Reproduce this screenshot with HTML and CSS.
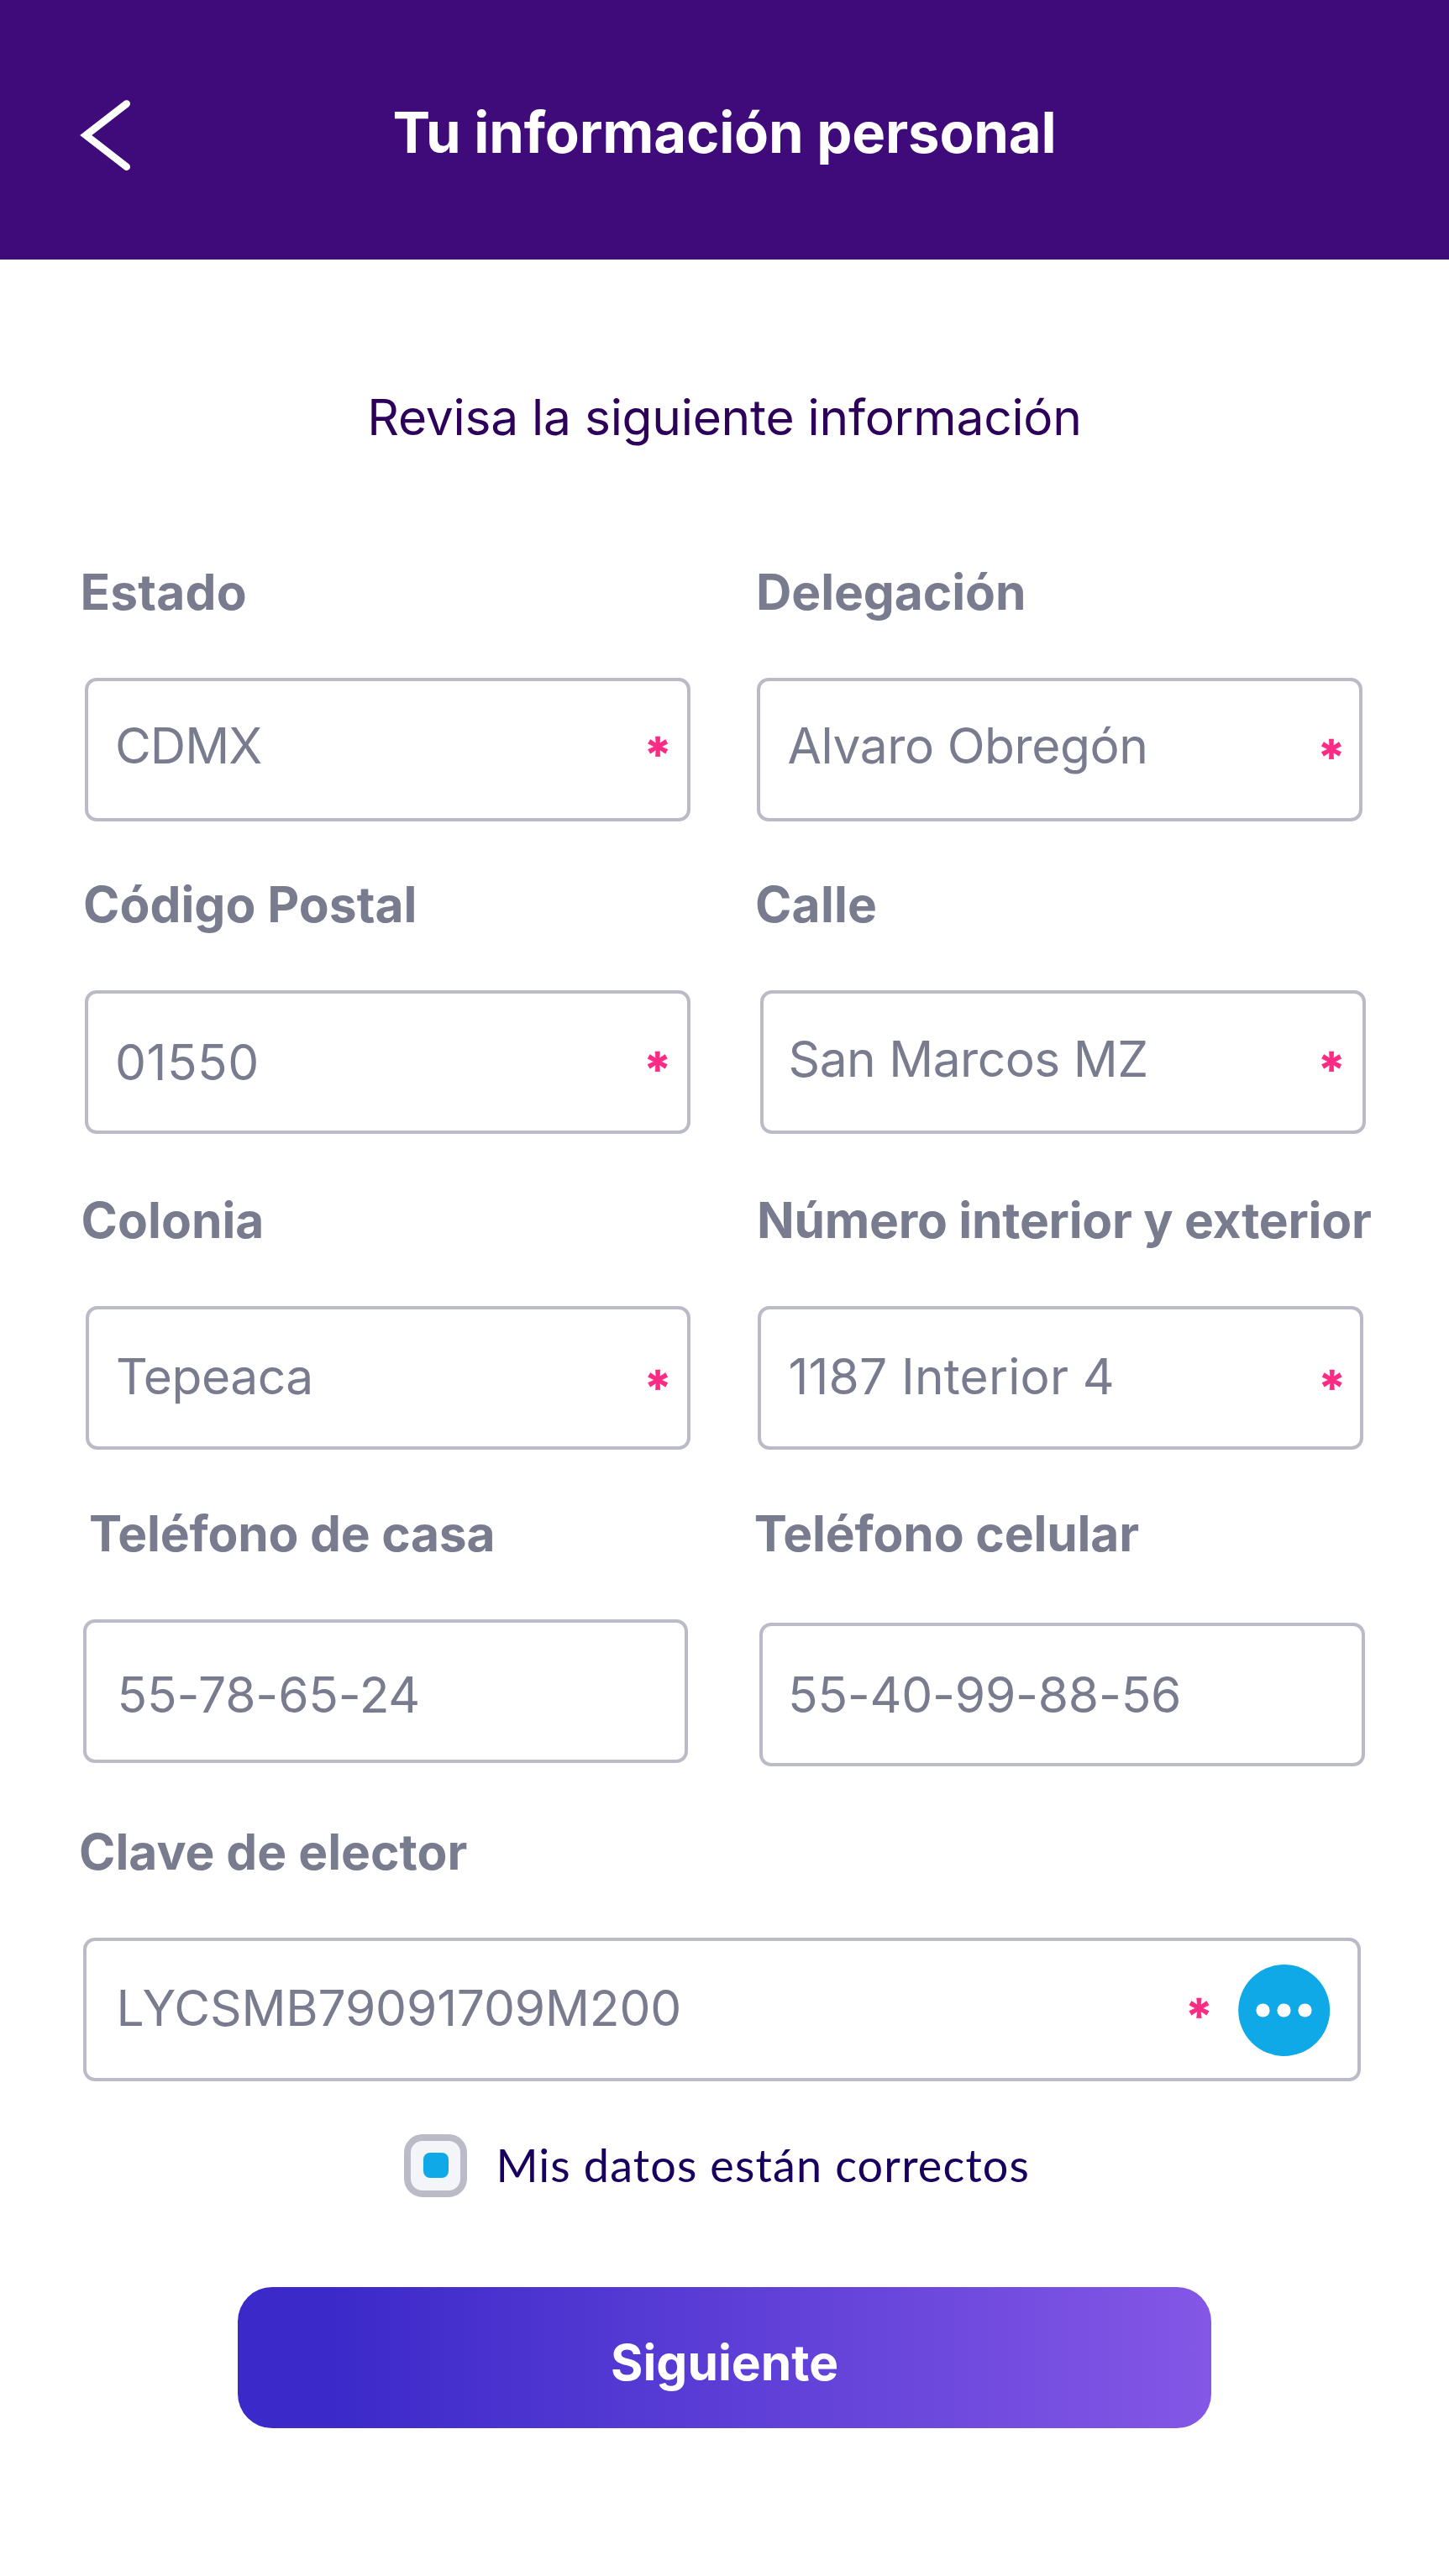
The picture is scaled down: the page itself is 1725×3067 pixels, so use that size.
FILE: index.html
```html
<!DOCTYPE html>
<html lang="es">
<head>
<meta charset="utf-8">
<title>Tu información personal</title>
<link rel="stylesheet" href="styles.css">
</head>
<body>
<header class="topbar">
  <a class="back" href="#" aria-label="Atrás">
    <svg width="64" height="88" viewBox="0 0 64 88" fill="none" stroke="#fff" stroke-width="8.6" stroke-linecap="round"><path d="M56.7 6.5 8.2 44 56.7 81.7"/></svg>
  </a>
  <h1 class="title">Tu información personal</h1>
</header>
<main>
  <p class="intro">Revisa la siguiente información</p>
  <form class="form">
    <div class="field estado">
      <span class="label">Estado</span>
      <div class="box"><span class="value">CDMX</span><span class="required">*</span></div>
    </div>
    <div class="field delegacion">
      <span class="label">Delegación</span>
      <div class="box"><span class="value">Alvaro Obregón</span><span class="required">*</span></div>
    </div>
    <div class="field postal">
      <span class="label">Código Postal</span>
      <div class="box"><span class="value">01550</span><span class="required">*</span></div>
    </div>
    <div class="field calle">
      <span class="label">Calle</span>
      <div class="box"><span class="value">San Marcos MZ</span><span class="required">*</span></div>
    </div>
    <div class="field colonia">
      <span class="label">Colonia</span>
      <div class="box"><span class="value">Tepeaca</span><span class="required">*</span></div>
    </div>
    <div class="field numero">
      <span class="label">Número interior y exterior</span>
      <div class="box"><span class="value">1187 Interior 4</span><span class="required">*</span></div>
    </div>
    <div class="field casa">
      <span class="label">Teléfono de casa</span>
      <div class="box"><span class="value">55-78-65-24</span></div>
    </div>
    <div class="field celular">
      <span class="label">Teléfono celular</span>
      <div class="box"><span class="value">55-40-99-88-56</span></div>
    </div>
    <div class="field clave">
      <span class="label">Clave de elector</span>
      <div class="box">
        <span class="value">LYCSMB79091709M200</span><span class="required">*</span>
        <svg class="more" width="110" height="110" viewBox="0 0 110 110"><circle cx="54.7" cy="54.5" r="54.5" fill="#0fa9e8"/><g fill="#fff"><circle cx="29.5" cy="54.5" r="8.1"/><circle cx="54.5" cy="54.5" r="8.1"/><circle cx="79.5" cy="54.5" r="8.1"/></g></svg>
      </div>
    </div>
  </form>
  <label class="confirm"><span class="check"><span class="mark"></span></span><span class="confirm-text">Mis datos están correctos</span></label>
  <button class="next" type="button">Siguiente</button>
</main>
</body>
</html>
```
FILE: styles.css
```css
* { box-sizing: border-box; }

body {
  margin: 0;
  width: 1725px;
  height: 3067px;
  background: #fff;
  font-family: Inter, "Liberation Sans", sans-serif;
  overflow: hidden;
}

.topbar {
  display: grid;
  grid-template-columns: 160px 1fr 160px;
  align-items: start;
  height: 309.4px;
  padding-top: 117px;
  background: #3f0a79;
}

.back { display: block; padding-left: 94px; height: 88px; }
.back svg { display: block; }

.title {
  margin: 0;
  font-size: 67px;
  line-height: 82px;
  font-weight: 700;
  letter-spacing: -0.19px;
  text-align: center;
  color: #fff;
}

.intro {
  margin: 151.6px 0 0;
  font-size: 58.7px;
  line-height: 72px;
  letter-spacing: -0.27px;
  text-align: center;
  color: #2d0059;
}

.form {
  display: grid;
  grid-template-columns: 803px 740px;
  grid-template-rows: 372px 376px 373px 379px 310px;
  padding-left: 94px;
  margin-top: 136px;
}

.field { --gap: 66px; --label-x: 0px; --box-x: 0px; --box-w: 721px; --label-ls: 0px; }

.label {
  display: block;
  margin: 0 0 var(--gap) var(--label-x);
  font-size: 58.7px;
  line-height: 72px;
  font-weight: 700;
  letter-spacing: var(--label-ls);
  white-space: nowrap;
  color: #797b8f;
}

.box {
  display: flex;
  align-items: flex-start;
  width: var(--box-w);
  height: 171.5px;
  margin-left: var(--box-x);
  padding: 0 var(--pad-r, 19px) 0 var(--pad-l);
  border: 4px solid #bbbbc7;
  border-radius: 14px;
}

.value {
  margin-top: var(--value-y);
  font-size: 58.7px;
  line-height: 72px;
  letter-spacing: var(--value-ls);
  white-space: nowrap;
  color: #797b8f;
}

.required {
  width: 32px;
  margin: var(--star-y) 0 0 auto;
  font-size: 58px;
  line-height: 74px;
  font-weight: 700;
  text-align: center;
  color: #fb2b85;
  -webkit-text-stroke: 0.5px #fb2b85;
}

.estado { --label-x: 1.4px; --box-x: 7px; --pad-l: 32px; --value-y: 41px; --value-ls: -1px; --star-y: 50px; --label-ls: 0.2px; }
.delegacion { --label-x: 3px; --label-ls: -0.1px; --box-x: 4.4px; --pad-l: 32px; --pad-r: 17.6px; --value-y: 41px; --value-ls: -0.45px; --star-y: 53px; }
.postal { --label-x: 5px; --box-x: 6.5px; --pad-l: 32.5px; --value-y: 46px; --value-ls: 0.5px; --star-y: 53px; }
.calle { --label-x: 2px; --label-ls: 0.2px; --box-x: 8px; --pad-l: 29.6px; --pad-r: 21px; --value-y: 42px; --value-ls: -0.54px; --star-y: 53px; }
.colonia { --label-x: 2.6px; --box-x: 8px; --box-w: 720px; --pad-l: 32px; --value-y: 44px; --value-ls: -0.5px; --star-y: 56px; }
.numero { --label-x: 4px; --label-ls: -0.26px; --box-x: 5.4px; --pad-l: 32px; --pad-r: 18px; --value-y: 44px; --value-ls: 0.17px; --star-y: 56px; }
.casa { --label-x: 12px; --label-ls: -0.22px; --box-x: 5px; --box-w: 720px; --pad-l: 36.5px; --value-y: 50px; --value-ls: -0.18px; }
.celular { --gap: 70px; --label-x: 0.8px; --label-ls: -0.16px; --box-x: 7px; --pad-l: 30px; --value-y: 46px; --value-ls: -0.25px; }
.clave { --box-x: 4.6px; --box-w: 1521.4px; --pad-l: 36px; --pad-r: 31.8px; --value-y: 44px; --value-ls: -0.19px; --star-y: 52px; grid-column: 1 / -1; }

.more { display: block; flex: none; margin: 28px 0 0 31px; }

.confirm {
  display: flex;
  align-items: flex-start;
  margin: 62px 0 0 481.4px;
}

.check {
  display: grid;
  place-items: center;
  flex: none;
  width: 75px;
  height: 75px;
  border: 8px solid #bbbbc7;
  border-radius: 22px;
  background: #f3f5f8;
}

.mark {
  width: 30px;
  height: 30px;
  border-radius: 8px;
  background: #0fa9e8;
}

.confirm-text {
  margin: 4px 0 0 34px;
  font-family: Lato, "Liberation Sans", sans-serif;
  font-size: 54px;
  line-height: 66px;
  letter-spacing: 1.13px;
  white-space: nowrap;
  color: #19005e;
}

.next {
  display: block;
  width: 1158.6px;
  height: 168px;
  margin: 107px 0 0 283.3px;
  padding: 12px 0 0;
  border: 0;
  border-radius: 41px;
  background: linear-gradient(90deg, #3b29c9 9%, #8457e6 100%);
  font: 700 58.7px/72px Inter, "Liberation Sans", sans-serif;
  color: #fff;
}
```
